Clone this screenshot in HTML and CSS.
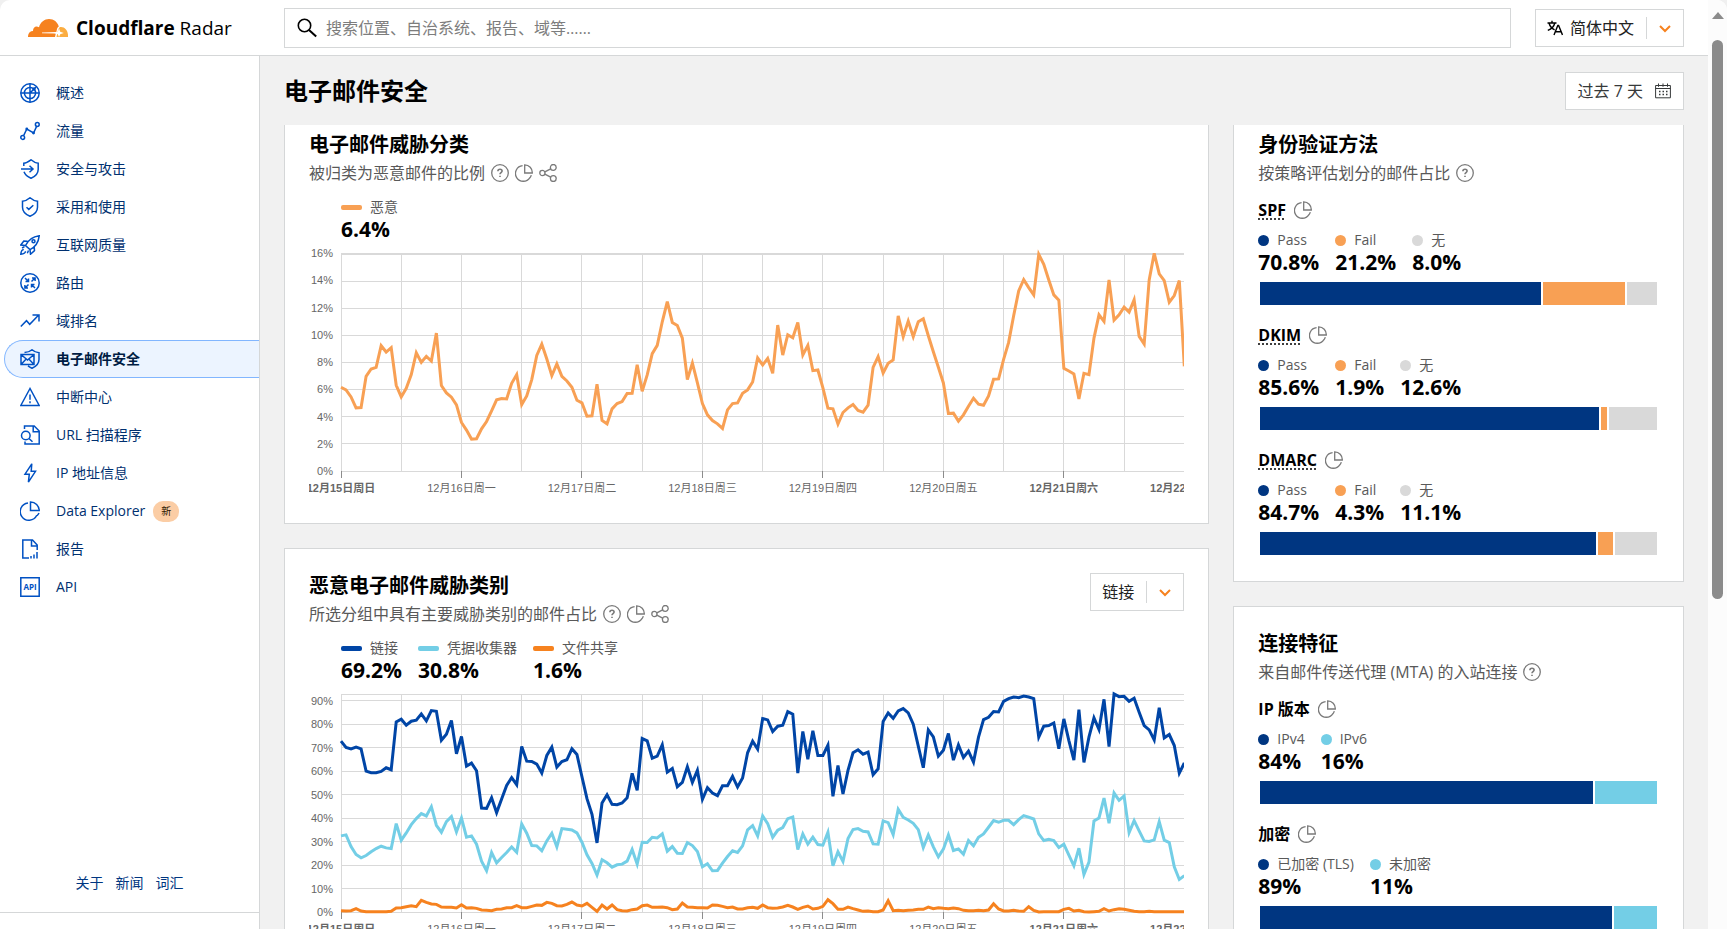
FILE: index.html
```html
<!DOCTYPE html>
<html lang="zh-CN">
<head>
<meta charset="utf-8">
<title>电子邮件安全 | Cloudflare Radar</title>
<link rel="stylesheet" href="styles.css">
</head>
<body>
<svg class="sprite" aria-hidden="true">
  <symbol id="help" viewBox="0 0 18 18"><circle cx="9" cy="9" r="8.3"/><path d="M6.9 7.2c0-1.2.9-2 2.1-2s2.1.8 2.1 1.9c0 1.4-2.1 1.5-2.1 3.1M9 11.7v1.4" stroke-width="1.6"/></symbol>
  <symbol id="pie" viewBox="0 0 18 18"><path d="M7.6 1.7A7.8 7.8 0 1 0 14.9 13.6M9.7.8v8.2h7.6A7.8 7.8 0 0 0 9.7.8zM16.3 11.2a7 7 0 0 1-1.4 2.7"/></symbol>
  <symbol id="share" viewBox="0 0 18 18"><circle cx="3.4" cy="9" r="2.6"/><circle cx="14.3" cy="3.4" r="2.9"/><circle cx="14.3" cy="14.6" r="2.9"/><path d="M5.8 7.9l5.9-3.1M5.8 10.1l5.9 3.1"/></symbol>
  <symbol id="chevron" viewBox="0 0 12 8"><path d="M1 1l5 5 5-5"/></symbol>
</svg>
<div class="window">
  <div class="page">
    <header class="topbar">
      <a class="brand" href="#">
        <svg class="brand-mark" viewBox="0 0 40 18" aria-hidden="true"><path fill="#f6821f" d="M0 18c-.2-4 2.300-6 5-6 0-4 3-5.600 6-3.800C12.500 3 16.500 0 21 0c5 0 8.500 3.200 9.800 7.400-2 .8-1.800 3.600-2.500 5.600L14 13.600v.6l13.800.3L27 18z"/><path fill="#fbad41" d="M28.500 18c1-3.500 1.400-9.600 4-9.900 4.500-.4 8 3.900 7.500 9.900z"/><path fill="#fff" d="M31 9.200l1.200 3.600 3.600 1.200-3.600 1.200L31 18l-1.200-2.800-3.600-1.200 3.600-1.200z"/></svg>
        <span><b>Cloudflare</b> Radar</span>
      </a>
      <label class="search">
        <svg viewBox="0 0 20 20" aria-hidden="true"><circle cx="7.500" cy="7.500" r="6.200"/><path d="M12 12l7.200 6.600" stroke-width="2"/></svg>
        <input type="search" aria-label="搜索" placeholder="搜索位置、自治系统、报告、域等……">
      </label>
      <div class="picker picker-lang">
        <svg class="picker-icon" viewBox="0 0 16 16" aria-hidden="true"><path d="M.5 3h9M5 .8V3M2 3c.8 3 3 5.600 5.600 6.800M7.800 3C7 6.400 4.500 9 .8 10.400M7 15l3.800-9.500h.8L15.500 15M8.500 11.800h5.600"/></svg>
        <select aria-label="语言"><option>简体中文</option></select>
        <svg class="chevron" aria-hidden="true"><use href="#chevron"/></svg>
      </div>
    </header>
    <div class="body">
      <aside class="sidebar">
        <nav>
          <a href="#"><svg viewBox="0 0 20 20"><circle cx="10" cy="10" r="9.200"/><circle cx="10" cy="10" r="5.600"/><path d="M.8 10h18.400M10 .8v18.400M10 10l6-6"/><circle cx="14" cy="6" r="1" fill="currentColor"/></svg>概述</a>
          <a href="#"><svg viewBox="0 0 20 20"><circle cx="2.700" cy="16.500" r="1.900"/><circle cx="17.300" cy="3.500" r="1.900"/><path d="M3.500 14.800L6.800 8l6.800 4 3-6.600"/><circle cx="6.800" cy="8" r=".7"/><circle cx="13.500" cy="12" r=".7"/></svg>流量</a>
          <a href="#"><svg viewBox="0 0 20 20"><path d="M3.800 7V4.200C6.500 4 8.500 2.600 11 .8c2.300 2 4.700 3.200 7.200 3.400v6c0 4-3 7.300-7.200 9-3.600-1.500-6-3.600-7-6.400M1 10h12M9.500 6.800L13 10l-3.500 3.200"/></svg>安全与攻击</a>
          <a href="#"><svg viewBox="0 0 20 20"><path d="M10 .8c2.500 2.200 4.800 3.200 7.500 3.400v6c0 4-3.300 7.300-7.500 9-4.200-1.700-7.500-5-7.500-9v-6C5.200 4 7.500 3 10 .8zM6.500 10.200l2.300 2.200 4.500-4.200"/></svg>采用和使用</a>
          <a href="#"><svg viewBox="0 0 20 20"><path d="M5.500 10.500C8 5.500 12 1.800 19.200.8c-.7 6.700-4.200 11.200-9.200 13.800zM7.500 6.200L3.800 6 .8 10l4.700.5M10 14.600l.5 4.600 4-3.600-.3-4M3.800 14.500c-2 .2-2.800 2.300-3 4.700 2.500-.2 4.500-1 4.700-3M4.500 11.700L2 13M8.500 15.500l-1.200 2.700"/><circle cx="13.500" cy="6.300" r="1.500"/></svg>互联网质量</a>
          <a href="#"><svg viewBox="0 0 20 20"><circle cx="10" cy="10" r="9.200"/><path d="M5 5l3.500 3.500M5.500 8.600h3V5.500M11.500 8.500L15 5M12 4.900h3.100V8M8.500 11.500L5 15M4.900 12v3.100H8M15 15l-3.500-3.500M14.500 11.400h-3v3"/></svg>路由</a>
          <a href="#"><svg viewBox="0 0 20 20"><path d="M.8 15.500l5.700-5.800 3.200 3.600 9-9.300M12.500 4H19v6.500"/></svg>域排名</a>
          <a href="#" class="active" aria-current="page"><svg viewBox="0 0 20 20"><path d="M1 5.500h13v10H1zM1 5.500l6.500 5.500L14 5.500M1 15.500l4.700-5M14 15.500l-4.700-5M4.500 3.500C7.500 3.500 10 2.500 12 .8c2 1.800 4.300 2.800 7 2.900v6.800c0 4-3 7-7 8.700-1.700-.7-3-1.500-4-2.300"/></svg>电子邮件安全</a>
          <a href="#"><svg viewBox="0 0 20 20"><path d="M10 1.500L.8 18.500h18.400zM10 7.500v5.200M10 14.300v1.900"/></svg>中断中心</a>
          <a href="#"><svg viewBox="0 0 20 20"><circle cx="5.800" cy="10.500" r="4.300"/><path d="M9 13.500l3.500 3.300M4.500 4V1h9.700l5 5v13H5v-2.500M13.200 1v5.800h6"/></svg>URL 扫描程序</a>
          <a href="#"><svg viewBox="0 0 20 20"><path d="M11.800.8L5 11.200h4.300L8.400 19.200 15.500 8.300h-4.300z"/></svg>IP 地址信息</a>
          <a href="#"><svg viewBox="0 0 20 20"><path d="M8 1.900a8.700 8.700 0 1 0 8.800 12.400M10.500.9v8.700h8.700A8.700 8.700 0 0 0 10.500.9zM19 12a8 8 0 0 1-2 2.700"/></svg>Data Explorer<span class="badge">新</span></a>
          <a href="#"><svg viewBox="0 0 20 20"><path d="M9 19H2.800V1h9.700l4.700 5v5M11.500 1v6h5.700M11 17v2.500M14 15.500v4M17 13v6.500"/></svg>报告</a>
          <a href="#"><svg viewBox="0 0 20 20"><path d="M.8.8h18.400v18.400H.8z"/><text x="10" y="13" class="api-text">API</text></svg>API</a>
        </nav>
        <footer class="side-links"><a href="#">关于</a><a href="#">新闻</a><a href="#">词汇</a></footer>
      </aside>
      <main>
        <div class="heading">
          <h1>电子邮件安全</h1>
          <button type="button" class="date">过去 7 天
            <svg viewBox="0 0 16 16" aria-hidden="true"><path d="M.6 2.500h14.800v12.300H.6zM.6 5.500h14.800M3.500.5v3.300M8 .5v3.300M12.500.5v3.300"/><path d="M4 8.500h9M4 11.500h9" stroke-width="1.500" stroke-dasharray="1.500 2"/></svg>
          </button>
        </div>
        <div class="columns">
          <div class="column column-wide">
            <section class="card card-cut">
              <h2>电子邮件威胁分类</h2>
              <p class="sub">被归类为恶意邮件的比例
                <svg class="icon"><use href="#help"/></svg><svg class="icon"><use href="#pie"/></svg><svg class="icon"><use href="#share"/></svg></p>
              <ul class="legend legend-line">
                <li class="apricot"><span>恶意</span><b>6.4%</b></li>
              </ul>
              <div class="chart" id="chart-threat"></div>
            </section>
            <section class="card">
              <div class="card-head">
                <div>
                  <h2>恶意电子邮件威胁类别</h2>
                  <p class="sub">所选分组中具有主要威胁类别的邮件占比
                    <svg class="icon"><use href="#help"/></svg><svg class="icon"><use href="#pie"/></svg><svg class="icon"><use href="#share"/></svg></p>
                </div>
                <div class="picker">
                  <select aria-label="威胁类别"><option>链接</option></select>
                  <svg class="chevron" aria-hidden="true"><use href="#chevron"/></svg>
                </div>
              </div>
              <ul class="legend legend-line">
                <li class="blue"><span>链接</span><b>69.2%</b></li>
                <li class="sky"><span>凭据收集器</span><b>30.8%</b></li>
                <li class="orange"><span>文件共享</span><b>1.6%</b></li>
              </ul>
              <div class="chart" id="chart-category"></div>
            </section>
          </div>
          <div class="column">
            <section class="card card-cut">
              <h2>身份验证方法</h2>
              <p class="sub">按策略评估划分的邮件占比 <svg class="icon"><use href="#help"/></svg></p>
              <div class="metric">
                <h3><abbr>SPF</abbr><svg class="icon"><use href="#pie"/></svg></h3>
                <ul class="legend"><li class="navy"><span>Pass</span><b>70.8%</b></li><li class="apricot"><span>Fail</span><b>21.2%</b></li><li class="grey"><span>无</span><b>8.0%</b></li></ul>
                <div class="bar"><i class="navy" style="flex-grow:70.8"></i><i class="apricot" style="flex-grow:20.8"></i><i class="grey" style="flex-grow:7.6"></i></div>
              </div>
              <div class="metric">
                <h3><abbr>DKIM</abbr><svg class="icon"><use href="#pie"/></svg></h3>
                <ul class="legend"><li class="navy"><span>Pass</span><b>85.6%</b></li><li class="apricot"><span>Fail</span><b>1.9%</b></li><li class="grey"><span>无</span><b>12.6%</b></li></ul>
                <div class="bar"><i class="navy" style="flex-grow:85.6"></i><i class="apricot" style="flex-grow:1.4"></i><i class="grey" style="flex-grow:12.2"></i></div>
              </div>
              <div class="metric">
                <h3><abbr>DMARC</abbr><svg class="icon"><use href="#pie"/></svg></h3>
                <ul class="legend"><li class="navy"><span>Pass</span><b>84.7%</b></li><li class="apricot"><span>Fail</span><b>4.3%</b></li><li class="grey"><span>无</span><b>11.1%</b></li></ul>
                <div class="bar"><i class="navy" style="flex-grow:84.7"></i><i class="apricot" style="flex-grow:3.8"></i><i class="grey" style="flex-grow:10.7"></i></div>
              </div>
            </section>
            <section class="card">
              <h2>连接特征</h2>
              <p class="sub">来自邮件传送代理 (MTA) 的入站连接 <svg class="icon"><use href="#help"/></svg></p>
              <div class="metric">
                <h3>IP 版本<svg class="icon"><use href="#pie"/></svg></h3>
                <ul class="legend"><li class="navy"><span>IPv4</span><b>84%</b></li><li class="sky"><span>IPv6</span><b>16%</b></li></ul>
                <div class="bar"><i class="navy" style="flex-grow:84.4"></i><i class="sky" style="flex-grow:15.6"></i></div>
              </div>
              <div class="metric">
                <h3>加密<svg class="icon"><use href="#pie"/></svg></h3>
                <ul class="legend"><li class="navy"><span>已加密 (TLS)</span><b>89%</b></li><li class="sky"><span>未加密</span><b>11%</b></li></ul>
                <div class="bar"><i class="navy" style="flex-grow:89.2"></i><i class="sky" style="flex-grow:10.8"></i></div>
              </div>
            </section>
          </div>
        </div>
      </main>
    </div>
  </div>
  <div class="scrollbar" aria-hidden="true"><span class="scroll-up"></span><span class="scroll-thumb"></span></div>
</div>
<script src="charts.js"></script>
</body>
</html>
```

FILE: styles.css
```css
* { box-sizing: border-box; }

body {
  margin: 0;
  background: #f0f0f0;
  color: #000;
  font: 14px/20px "Open Sans", "Noto Sans CJK SC", sans-serif;
}

h1, h2, h3, p, ul { margin: 0; padding: 0; }
ul { list-style: none; }
a { color: inherit; text-decoration: none; }
svg { fill: none; stroke: currentColor; flex: none; }
button, input, select { font: inherit; color: inherit; }
.sprite { display: none; }

.window {
  display: flex;
  height: 100vh;
  overflow: hidden;
  border-radius: 10px 10px 0 0;
  background: #fff;
}
.page { flex: 1; min-width: 0; display: flex; flex-direction: column; }

/* Top bar */
.topbar {
  display: flex;
  align-items: center;
  height: 56px;
  flex: none;
  padding-right: 24px;
  border-bottom: 1px solid #d5d7d8;
}
.brand {
  display: flex;
  align-items: center;
  gap: 8px;
  width: 284px;
  padding-left: 28px;
  font-size: 19px;
  white-space: nowrap;
}
.brand-mark { width: 40px; height: 18px; stroke: none; }
.search {
  flex: 1;
  display: flex;
  align-items: center;
  gap: 9px;
  height: 40px;
  margin-right: 24px;
  padding: 0 12px;
  border: 1px solid #d5d7d8;
}
.search svg { width: 20px; height: 20px; stroke-width: 1.6; }
.search input { flex: 1; border: 0; outline: 0; padding: 0; background: none; font-size: 16px; }
.search input::placeholder { color: #7d7d7d; }

.picker { position: relative; flex: none; }
.picker select {
  display: block;
  height: 38px;
  padding: 0 48px 0 11px;
  appearance: none;
  border: 1px solid #d5d7d8;
  border-radius: 0;
  background: #fff;
  color: #222;
  font-size: 16px;
}
.picker-lang select { padding-left: 34px; }
.picker-icon { position: absolute; left: 12px; top: 11px; width: 16px; height: 16px; stroke-width: 1.4; pointer-events: none; }
.picker::after { content: ""; position: absolute; right: 37px; top: 8px; bottom: 8px; border-left: 1px solid #d5d7d8; }
.chevron { position: absolute; right: 13px; top: 16px; width: 12px; height: 8px; color: #f6821f; stroke-width: 2; pointer-events: none; }

/* Sidebar */
.body { flex: 1; min-height: 0; display: flex; }
.sidebar {
  display: flex;
  flex-direction: column;
  justify-content: space-between;
  width: 260px;
  flex: none;
  padding: 18px 0 16px;
  border-right: 1px solid #d5d7d8;
  color: #003070;
}
nav a {
  display: flex;
  align-items: center;
  gap: 16px;
  height: 38px;
  margin-left: 4px;
  padding-left: 15px;
  border: 1px solid transparent;
  border-right: 0;
  border-radius: 19px 0 0 19px;
}
nav svg { width: 20px; height: 20px; color: #0051c3; stroke-width: 1.5; }
nav .active { background: #ecf4ff; border-color: #82b6ff; color: #001c43; font-weight: 700; }
.api-text { font: 700 8px "Open Sans", sans-serif; text-anchor: middle; fill: currentColor; stroke: none; }
.badge {
  margin-left: -8px;
  padding: 0 8px;
  border-radius: 10px;
  background: #fbcda5;
  color: #2c1400;
  font-size: 10px;
  line-height: 21px;
}
.side-links { display: flex; justify-content: center; gap: 12px; padding-bottom: 19px; border-bottom: 1px solid #d5d7d8; color: #003681; }

/* Main */
main { flex: 1; min-width: 0; display: flex; flex-direction: column; padding: 0 24px; background: #f1f1f1; }
.heading { display: flex; justify-content: space-between; align-items: center; height: 69px; flex: none; }
h1 { font-size: 24px; line-height: 32px; }
.date { display: flex; align-items: center; gap: 12px; height: 38px; padding: 0 12px; border: 1px solid #d5d7d8; background: #fff; color: #36393a; font-size: 16px; }
.date svg { width: 16px; height: 16px; }

.columns { flex: 1; min-height: 0; overflow: hidden; display: grid; grid-template-columns: repeat(3, minmax(0, 1fr)); gap: 24px; }
.column { display: flex; flex-direction: column; gap: 24px; }
.column-wide { grid-column: span 2; }
.card { flex: none; padding: 24px; border: 1px solid #d5d7d8; background: #fff; }
.card-cut { padding-top: 7px; border-top: 0; }
.card-head { display: flex; justify-content: space-between; align-items: flex-start; }
h2 { font-size: 20px; line-height: 26px; }
.sub { display: flex; align-items: center; gap: 6px; color: #595959; font-size: 16px; line-height: 30px; }
.icon { width: 18px; height: 18px; color: #7a7a7a; stroke-width: 1.3; }

.navy { --tone: #003681; }
.blue { --tone: #0045a6; }
.sky { --tone: #73cee6; }
.orange { --tone: #f6821f; }
.apricot { --tone: #f8a054; }
.grey { --tone: #d9d9d9; }

.legend { display: flex; gap: 16px; }
.legend span { display: flex; align-items: center; gap: 8px; color: #595959; }
.legend span::before { content: ""; width: 11px; height: 11px; border-radius: 50%; background: var(--tone); }
.legend b { display: block; font-size: 21px; line-height: 24px; }
.legend-line { margin: 9px 0 12px 32px; }
.legend-line span::before { width: 21px; height: 5px; border-radius: 2px; }

.metric { margin-top: 16px; }
.sub + .metric { margin-top: 10px; }
h3 { display: flex; align-items: center; gap: 8px; margin-bottom: 8px; font-size: 16px; line-height: 24px; }
abbr { text-decoration: underline dotted; text-underline-offset: 3px; }
.bar { display: flex; gap: 2px; margin-top: 8px; padding: 0 2px 2px; }
.bar i { flex-basis: 0; height: 23px; background: var(--tone); }

/* Charts */
.chart { display: grid; grid-template-columns: 24px minmax(0, 1fr); column-gap: 8px; overflow: hidden; color: #666; font: 11px/16px "Liberation Sans", "Noto Sans CJK SC", sans-serif; padding-top: 6px; margin-top: -6px; }
.y-axis { display: flex; flex-direction: column; justify-content: space-between; height: 218px; text-align: right; }
.y-axis span { height: 0; line-height: 0; }
#chart-category .y-axis { padding-top: 7px; }
.plot { display: block; width: 100%; height: 218px; overflow: visible; }
.plot .rule { stroke: #d9d9d9; shape-rendering: crispEdges; }
.plot .tick { stroke: #8c8c8c; }
.plot .series { stroke: var(--tone); stroke-width: 3; }
.plot * { vector-effect: non-scaling-stroke; }
.x-axis { grid-column: 2; display: grid; grid-template-columns: repeat(8, 1fr); margin: 9px -7.143% 3px; text-align: center; white-space: nowrap; }

/* Scrollbar */
.scrollbar { display: flex; flex-direction: column; align-items: center; flex: none; width: 19px; padding-top: 12px; background: #fcfcfc; }
.scroll-up { border: 6px solid transparent; border-top: 0; border-bottom: 7px solid #8b8b8b; }
.scroll-thumb { width: 11px; height: 61%; margin-top: 21px; border-radius: 6px; background: #8b8b8b; }
```

FILE: charts.js
```js
// Hourly readings come in two batches; each starts with the reading that stands for 0%.
// Readings grow downwards, like SVG y coordinates.
const threat = [
  [1055, [803,811,832,865,864,770,748,743,678,697,684,797,832,806,765,699,728,710,724,640,798,820,833,856,
    909,932,959,958,928,906,874,841,837,838,791,765,855,829,780,707,673,718,768,733,770,784,803,842,
    850,890,889,794,903,913,868,852,846,822,821,735,815,766,702,677,606,545,608,617,655,780,730,790,
    852,886,903,913,927,871,852,850,821]],
  [695, [451,427,355,376,356,401,256,346,285,294,248,346,317,393,391,
    445,506,508,554,519,505,495,513,518,497,383,351,400,371,361,228,291,244,291,246,237,288,336,383,
    430,522,521,545,526,500,476,494,497,469,419,418,359,308,228,153,119,143,165,43,73,120,165,181,
    386,394,403,478,401,405,295,225,245,120,241,225,202,217,180,290,313,120,40,102,122,187,167,122,380]]
];
const links = [
  [1121, [607,626,630,625,630,697,702,702,698,687,693,549,541,559,547,544,525,546,515,517,604,586,545,645,
    593,682,673,696,808,809,777,822,781,740,717,738,623,667,668,676,703,650,625,685,668,663,630,647,
    714,780,827,913,793,768,797,798,793,777,704,755,599,606,658,652,618,700,689,744,731,684,731,695,
    782,747,763,771,741,741,713,745,718]],
  [1061, [582,547,571,479,483,518,502,499,458,466,643,518,601,516,590,
    590,559,713,620,706,635,582,573,586,580,648,630,488,462,478,456,449,462,496,562,627,513,534,592,
    574,524,604,558,596,577,610,535,482,475,458,459,427,419,414,416,411,414,419,535,502,500,492,570,
    480,545,604,452,611,535,477,512,421,563,405,413,412,427,418,460,500,513,543,446,537,527,560,643,612]]
];
const harvest = [
  [1121, [892,889,924,948,958,951,940,930,923,928,930,855,905,883,858,840,825,832,804,860,881,849,834,880,
    838,896,892,917,968,997,942,973,957,942,925,941,856,884,921,922,937,907,884,925,870,872,874,883,
    911,949,975,1010,964,973,986,979,977,968,933,977,911,912,896,898,886,938,924,944,945,912,921,939,
    985,976,997,996,974,954,937,942,922]],
  [1061, [814,801,832,772,795,836,815,807,780,775,873,826,857,836,858,
    860,821,922,880,909,840,813,810,818,820,856,857,787,792,828,752,776,784,794,813,867,829,865,895,
    872,829,876,871,887,846,862,836,826,806,786,791,785,785,798,783,771,776,781,826,846,842,846,867,
    857,890,922,869,948,911,787,778,718,794,703,725,712,822,786,817,847,849,844,789,845,852,925,963,952]]
];
const sharing = [
  [1121, [1117,1118,1117,1111,1118,1120,1120,1120,1120,1120,1119,1109,1108,1105,1102,1105,1086,1092,1097,1098,1106,1107,1107,1109,
    1099,1109,1108,1110,1115,1116,1117,1113,1112,1108,1108,1102,1108,1108,1104,1100,1101,1092,1095,1102,1103,1098,1091,1100,
    1103,1095,1107,1119,1100,1112,1100,1114,1117,1118,1114,1112,1102,1100,1107,1107,1106,1108,1114,1112,1094,1106,1107,1108,
    1108,1109,1100,1101,1104,1108,1106,1112,1112]],
  [1061, [1048,1047,1050,1040,1048,1050,1049,1046,1041,1046,1053,1047,1043,1052,1050,
    1044,1024,1036,1053,1053,1046,1051,1055,1059,1058,1060,1060,1055,1027,1057,1056,1057,1056,1055,1053,1053,1046,1051,1048,
    1050,1051,1049,1051,1056,1057,1057,1056,1057,1055,1036,1052,1058,1058,1056,1058,1059,1045,1056,1061,1060,1060,1060,1060,
    1053,1050,1058,1056,1060,1061,1060,1059,1051,1058,1054,1051,1053,1056,1059,1060,1060,1059,1060,1060,1060,1060,1060,1060,1060]]
];

const HEIGHT = 656;
const days = ["日", "一", "二", "三", "四", "五", "六", "日"];

function line(cls, x1, y1, x2, y2) {
  return `<line class="${cls}" x1="${x1}" y1="${y1}" x2="${x2}" y2="${y2}"/>`;
}

function draw(id, step, top, unit, series) {
  let marks = line("rule", 0, 0, 168, 0);
  let yLabels = "";
  for (let value = top; value >= 0; value -= step) {
    const y = HEIGHT - value * unit;
    marks += line("rule", 0, y, 168, y);
    yLabels += `<span>${value}%</span>`;
  }
  for (let hour = 0; hour < 168; hour += 12) marks += line("rule", hour, 0, hour, HEIGHT);
  for (let hour = 0; hour < 168; hour += 24) marks += line("rule tick", hour, HEIGHT, hour, HEIGHT + 22);
  for (const [tone, batches] of series) {
    const points = batches
      .flatMap(([zero, readings]) => readings.map(r => HEIGHT - zero + r))
      .map((y, hour) => `${hour},${y}`);
    marks += `<polyline class="series ${tone}" points="${points.join(" ")}"/>`;
  }
  const xLabels = days.map((day, i) => {
    const text = `12月${15 + i}日周${day}`;
    return day === "日" || day === "六" ? `<b>${text}</b>` : `<span>${text}</span>`;
  });
  document.getElementById(id).innerHTML =
    `<div class="y-axis">${yLabels}</div>` +
    `<svg class="plot" viewBox="0 0 168 ${HEIGHT}" preserveAspectRatio="none">${marks}</svg>` +
    `<div class="x-axis">${xLabels.join("")}</div>`;
}

draw("chart-threat", 2, 16, 40.71, [["apricot", threat]]);
draw("chart-category", 10, 90, 7.067, [["sky", harvest], ["orange", sharing], ["blue", links]]);
```
